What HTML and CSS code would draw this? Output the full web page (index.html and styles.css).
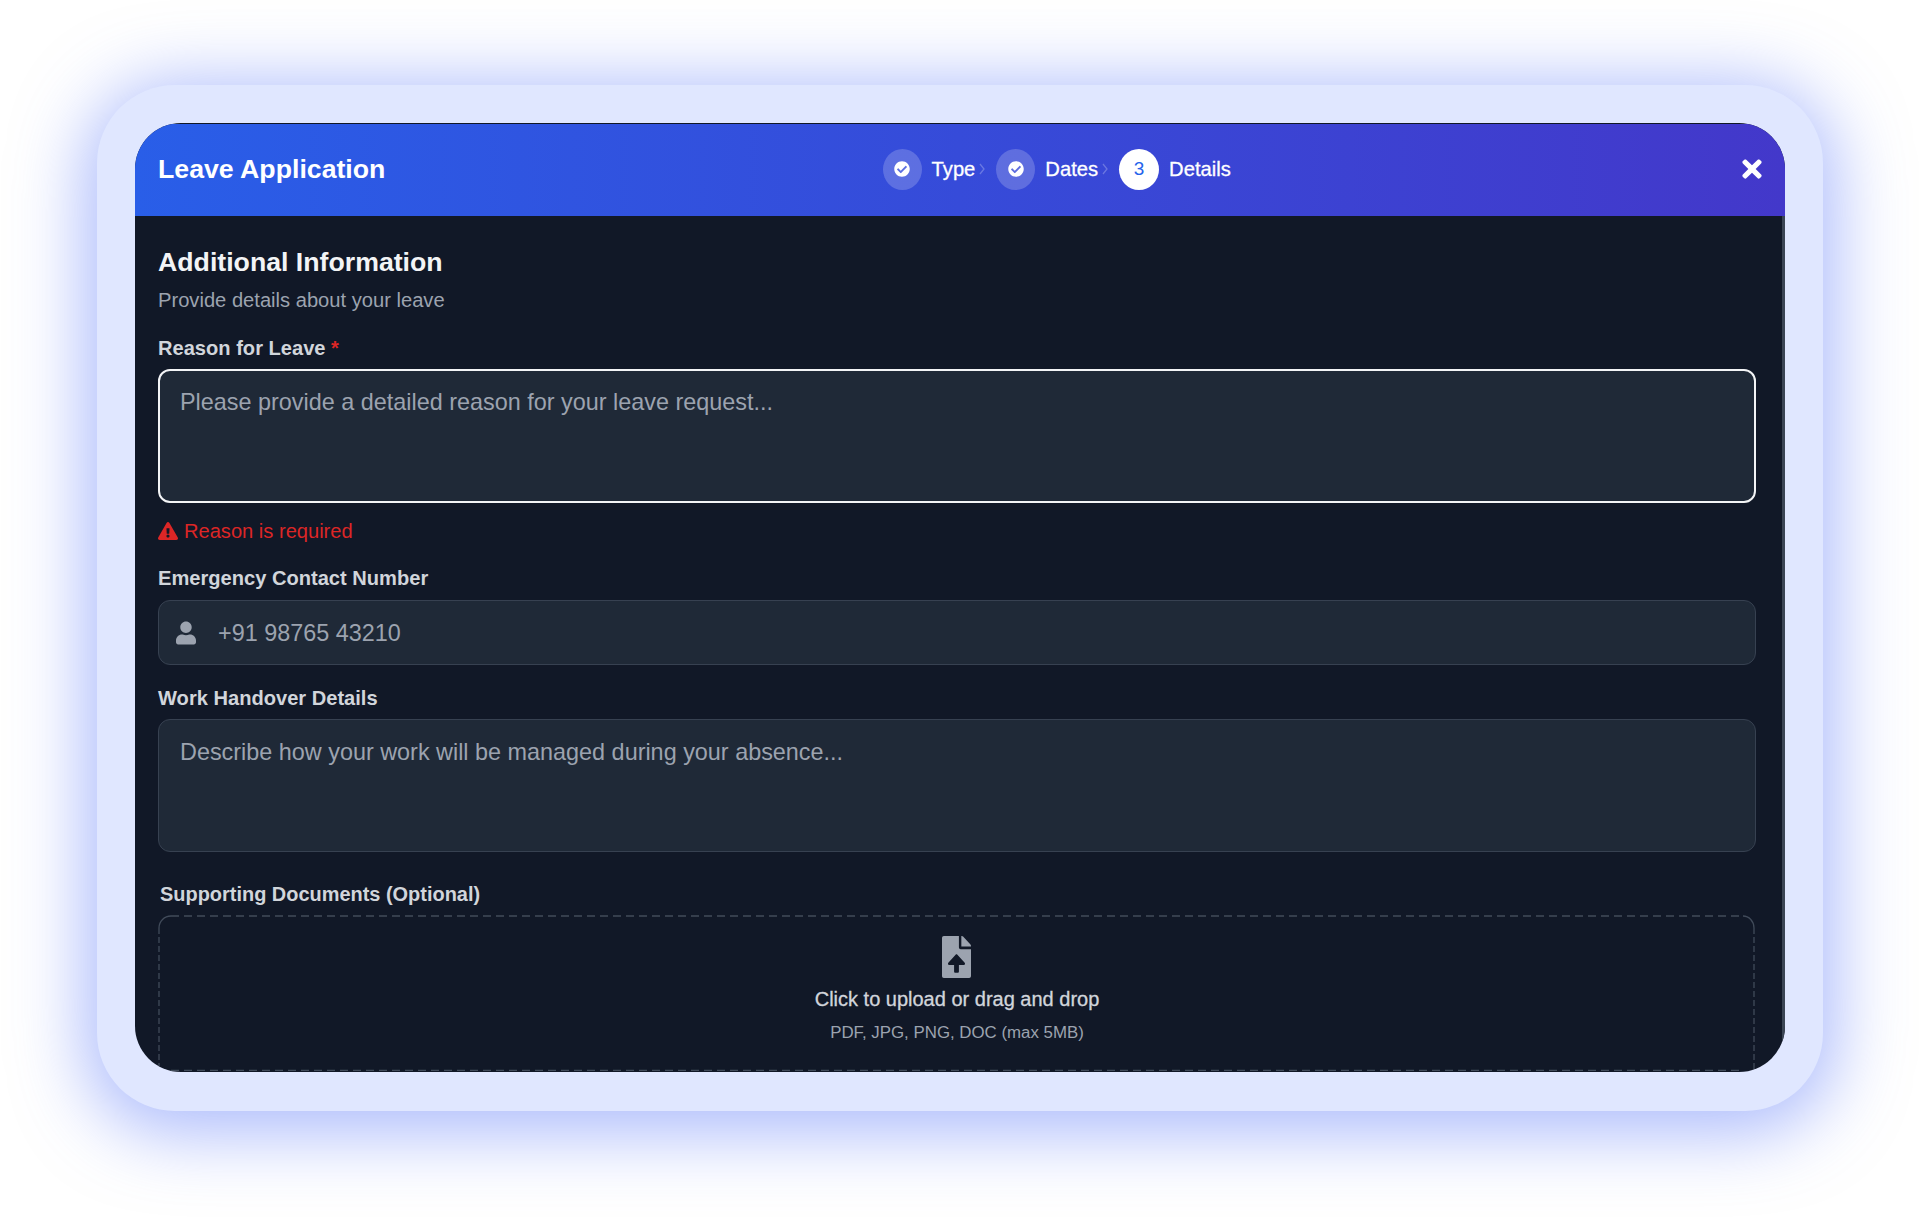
FILE: index.html
```html
<!DOCTYPE html>
<html lang="en">
<head>
<meta charset="utf-8">
<title>Leave Application</title>
<link rel="stylesheet" href="styles.css">
</head>
<body>
<div class="frame">
  <div class="modal">
    <header class="modal-header">
      <h1 class="modal-title">Leave Application</h1>
      <div class="steps">
        <div class="step">
          <span class="step-dot done"><svg class="icon-check" viewBox="0 0 512 512"><path d="M504 256c0 136.967-111.033 248-248 248S8 392.967 8 256 119.033 8 256 8s248 111.033 248 248zM227.314 387.314l184-184c6.248-6.248 6.248-16.379 0-22.627l-22.627-22.627c-6.248-6.249-16.379-6.249-22.628 0L216 308.118l-70.059-70.059c-6.248-6.248-16.379-6.248-22.628 0l-22.627 22.627c-6.248 6.248-6.248 16.379 0 22.627l104 104c6.249 6.249 16.379 6.249 22.628.001z"/></svg></span>
          <span class="step-label">Type</span>
          <svg class="chevron" viewBox="0 0 6 12"><path d="M1 1l4 5-4 5"/></svg>
        </div>
        <div class="step">
          <span class="step-dot done"><svg class="icon-check" viewBox="0 0 512 512"><path d="M504 256c0 136.967-111.033 248-248 248S8 392.967 8 256 119.033 8 256 8s248 111.033 248 248zM227.314 387.314l184-184c6.248-6.248 6.248-16.379 0-22.627l-22.627-22.627c-6.248-6.249-16.379-6.249-22.628 0L216 308.118l-70.059-70.059c-6.248-6.248-16.379-6.248-22.628 0l-22.627 22.627c-6.248 6.248-6.248 16.379 0 22.627l104 104c6.249 6.249 16.379 6.249 22.628.001z"/></svg></span>
          <span class="step-label">Dates</span>
          <svg class="chevron" viewBox="0 0 6 12"><path d="M1 1l4 5-4 5"/></svg>
        </div>
        <div class="step">
          <span class="step-dot current">3</span>
          <span class="step-label">Details</span>
        </div>
      </div>
      <button class="close" type="button" aria-label="Close"><svg viewBox="0 0 352 512"><path d="M242.72 256l100.07-100.07c12.28-12.28 12.28-32.19 0-44.48l-22.24-22.24c-12.28-12.28-32.19-12.28-44.48 0L176 189.28 75.93 89.21c-12.28-12.28-32.19-12.28-44.48 0L9.21 111.45c-12.28 12.28-12.28 32.19 0 44.48L109.28 256 9.21 356.07c-12.28 12.28-12.28 32.19 0 44.48l22.24 22.24c12.28 12.28 32.2 12.28 44.48 0L176 322.72l100.07 100.07c12.28 12.28 32.2 12.28 44.48 0l22.24-22.24c12.28-12.28 12.28-32.19 0-44.48L242.72 256z"/></svg></button>
    </header>
    <main class="modal-body">
      <h2 class="section-title">Additional Information</h2>
      <p class="section-sub">Provide details about your leave</p>

      <section class="group group-reason">
        <div class="label">Reason for Leave <span class="req">*</span></div>
        <div class="field area focused"><span class="placeholder">Please provide a detailed reason for your leave request...</span></div>
        <div class="error">
          <svg class="icon-warn" viewBox="0 0 576 512"><path d="M569.517 440.013C587.975 472.007 564.806 512 527.94 512H48.054c-36.937 0-59.999-40.055-41.577-71.987L246.423 23.985c18.467-32.009 64.72-31.951 83.154 0l239.94 416.028zM288 354c-25.405 0-46 20.595-46 46s20.595 46 46 46 46-20.595 46-46-20.595-46-46-46zm-43.673-165.346l7.418 136c.347 6.364 5.609 11.346 11.982 11.346h48.546c6.373 0 11.635-4.982 11.982-11.346l7.418-136c.375-6.874-5.098-12.654-11.982-12.654h-63.383c-6.884 0-12.356 5.78-11.981 12.654z"/></svg>
          <span>Reason is required</span>
        </div>
      </section>

      <section class="group group-contact">
        <div class="label label-contact">Emergency Contact Number</div>
        <div class="field input">
          <svg class="icon-user" viewBox="0 0 448 512"><path d="M224 256c70.7 0 128-57.3 128-128S294.7 0 224 0 96 57.3 96 128s57.3 128 128 128zm89.6 32h-16.7c-22.2 10.2-46.9 16-72.9 16s-50.6-5.8-72.9-16h-16.7C60.2 288 0 348.2 0 422.4V464c0 26.5 21.5 48 48 48h352c26.5 0 48-21.5 48-48v-41.6c0-74.2-60.2-134.4-134.4-134.4z"/></svg>
          <span class="placeholder">+91 98765 43210</span>
        </div>
      </section>

      <section class="group group-handover">
        <div class="label">Work Handover Details</div>
        <div class="field area"><span class="placeholder">Describe how your work will be managed during your absence...</span></div>
      </section>

      <section class="group group-docs">
        <div class="label label-docs">Supporting Documents (Optional)</div>
        <div class="drop">
          <svg class="drop-border" viewBox="0 0 1598 156" aria-hidden="true">
            <path class="dash-h" d="M13 1H1585"/>
            <path class="dash-h" d="M13 155.5H1585"/>
            <path class="dash-v" d="M1 13V156"/>
            <path class="dash-v" d="M1596 13V156"/>
            <path class="dash-c" d="M1 13A12 12 0 0 1 13 1M1585 1A11 12 0 0 1 1596 13"/>
          </svg>
          <svg class="icon-file" viewBox="0 0 384 512" preserveAspectRatio="none"><path d="M224 136V0H24C10.7 0 0 10.7 0 24v464c0 13.3 10.7 24 24 24h336c13.3 0 24-10.7 24-24V160H248c-13.2 0-24-10.8-24-24zm65.18 216.01H224v80c0 8.84-7.16 16-16 16h-32c-8.84 0-16-7.16-16-16v-80H94.82c-14.28 0-21.41-17.29-11.27-27.36l96.42-95.7c6.65-6.61 17.39-6.61 24.04 0l96.42 95.7c10.15 10.07 3.03 27.36-11.25 27.36zM377 105L279.1 7c-4.5-4.5-10.6-7-17-7H256v128h128v-6.1c0-6.3-2.5-12.4-7-16.9z"/></svg>
          <div class="drop-title">Click to upload or drag and drop</div>
          <div class="drop-sub">PDF, JPG, PNG, DOC (max 5MB)</div>
        </div>
      </section>
    </main>
  </div>
</div>
</body>
</html>
```

FILE: styles.css
```css
* { box-sizing: border-box; }
html, body { margin: 0; padding: 0; background: #fff; }
body {
  height: 1219px;
  overflow: hidden;
  padding: 85px 97px 108px;
  font-family: "Liberation Sans", Arial, sans-serif;
}
.frame {
  height: 1026px;
  padding: 38px;
  border-radius: 78px;
  background: #e0e7ff;
  box-shadow: 0 10px 70px 12px rgba(90, 120, 250, 0.5);
}
.modal {
  height: 949px;
  display: flex;
  flex-direction: column;
  overflow: hidden;
  border-radius: 46px;
  background: #111827;
  padding-top: 1px;
}
.modal-header {
  flex: none;
  height: 92px;
  padding: 0 23px 2px;
  display: flex;
  align-items: center;
  justify-content: space-between;
  background: linear-gradient(90deg, #295ee8, #4338ca);
  color: #fff;
}
.modal-title {
  margin: 0;
  font-size: 26.7px;
  line-height: 36px;
  font-weight: 700;
}
.steps { display: flex; align-items: center; gap: 11px; }
.step { display: flex; align-items: center; }
.step-dot {
  width: 39px;
  height: 41px;
  border-radius: 50%;
  display: flex;
  align-items: center;
  justify-content: center;
  margin-right: 10px;
}
.step-dot.done { background: rgba(255, 255, 255, 0.2); }
.step-dot.current {
  width: 40px;
  background: #fff;
  color: #2563eb;
  font-size: 19px;
}
.icon-check { width: 16px; height: 16px; fill: #fff; }
.step-label {
  font-size: 20.2px;
  line-height: 28px;
  color: #fff;
  -webkit-text-stroke: 0.3px #fff;
}
.chevron {
  width: 6px;
  height: 12px;
  margin-left: 4px;
  fill: none;
  stroke: rgba(255, 255, 255, 0.25);
  stroke-width: 1.3;
}
.close {
  width: 34px;
  height: 24px;
  padding: 0 0 0 14px;
  border: 0;
  background: none;
  display: flex;
  align-items: center;
}
.close svg { width: 20px; height: 28px; fill: #fff; }
.modal-body {
  flex: 1;
  overflow: hidden;
  padding: 30px 26px 0 23px;
  border-right: 3px solid #3b4554;
}
.section-title {
  margin: 0;
  font-size: 26.7px;
  line-height: 32px;
  font-weight: 700;
  color: #f3f4f6;
}
.section-sub {
  margin: 10px 0 0;
  font-size: 20.15px;
  line-height: 24px;
  color: #9ca3af;
}
.group-reason { margin-top: 25px; }
.group-contact { margin-top: 25px; }
.group-handover { margin-top: 22px; }
.group-docs { margin-top: 31px; }
.label {
  font-size: 20.1px;
  line-height: 22px;
  font-weight: 700;
  color: #d1d5db;
  margin-bottom: 10px;
}
.label-contact { margin-bottom: 11px; }
.label-docs { margin-left: 2px; font-size: 19.95px; }
.req { color: #dc2626; }
.field {
  background: #1f2937;
  border: 1px solid #374151;
  border-radius: 12px;
}
.area { height: 133px; padding: 18px 21px; }
.focused { border: 2px solid #f3f4f6; padding: 17px 20px; height: 134px; }
.input {
  height: 65px;
  display: flex;
  align-items: center;
  padding: 0 17px;
  gap: 22px;
}
.placeholder { font-size: 23.4px; line-height: 28px; color: #9ca3af; }
.error {
  margin-top: 17px;
  display: flex;
  align-items: center;
  gap: 6px;
  font-size: 20.1px;
  line-height: 22px;
  color: #dc2626;
}
.icon-warn { width: 20px; height: 18px; fill: #dc2626; }
.icon-user { width: 20px; height: 24px; fill: #9ca3af; flex: none; }
.drop {
  position: relative;
  height: 156px;
  padding-top: 21px;
  display: flex;
  flex-direction: column;
  align-items: center;
}
.drop-border {
  position: absolute;
  inset: 0;
  width: 100%;
  height: 100%;
  fill: none;
  stroke: #414b5a;
  stroke-width: 1.3;
}
.dash-h { stroke-dasharray: 8 5; }
.dash-v { stroke-dasharray: 6 3; }
.icon-file { width: 29px; height: 42px; fill: #9ca3af; margin-right: 2px; }
.drop-title {
  margin-top: 9px;
  font-size: 20px;
  line-height: 24px;
  color: #d1d5db;
  -webkit-text-stroke: 0.3px #d1d5db;
}
.drop-sub {
  margin-top: 12px;
  font-size: 16.85px;
  line-height: 20px;
  color: #9ca3af;
}
```
